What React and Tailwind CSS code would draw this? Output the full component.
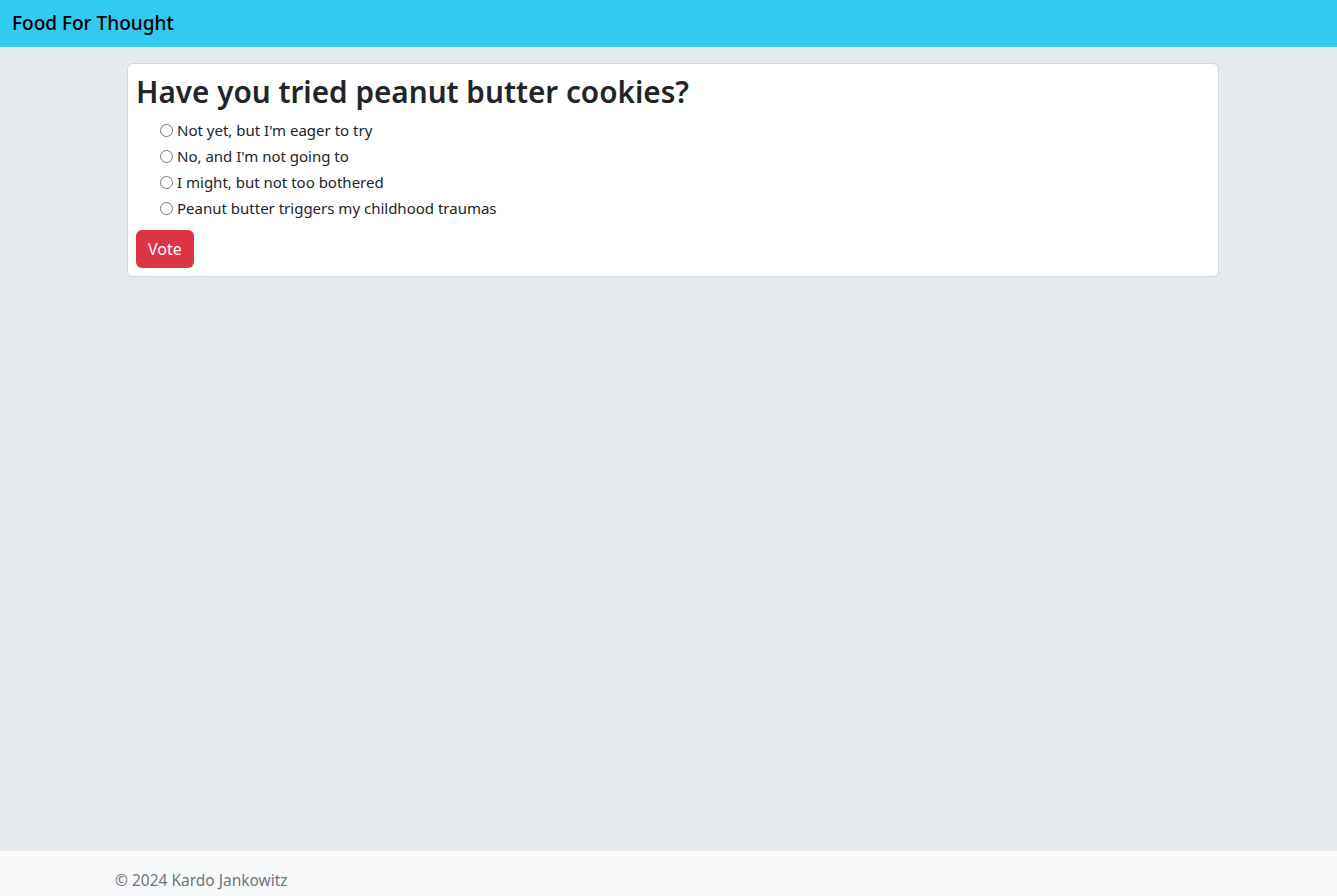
import React from "react";

const options = [
  "Not yet, but I'm eager to try",
  "No, and I'm not going to",
  "I might, but not too bothered",
  "Peanut butter triggers my childhood traumas",
];

const App = () => {
  return (
    <div
      className="flex flex-col min-h-screen bg-[#e7eaed] text-[#212529]"
      style={{ fontFamily: '"Noto Sans", "Open Sans", sans-serif' }}
    >
      <nav className="h-[47px] bg-[#32caee] flex items-center px-3">
        <span className="text-[19px] font-medium text-black">Food For Thought</span>
      </nav>

      <main className="flex-1 pt-4">
        <div className="ml-[127px] w-[1092px] bg-white border border-[#d4d6d8] rounded-md px-2 pt-2 pb-2">
          <h1 className="text-[29.7px] font-semibold leading-[39px] mb-2">
            Have you tried peanut butter cookies?
          </h1>
          <div className="flex flex-col pl-6">
            {options.map((o) => (
              <label key={o} className="flex items-center h-[26px] text-[15px] -mt-[2px] mb-[2px]">
                <input type="radio" name="vote" className="w-[13px] h-[13px] mr-[4px]" />
                {o}
              </label>
            ))}
          </div>
          <button className="mt-[7px] bg-[#dc3545] text-white rounded-md px-3 h-[38px] text-[16px]">
            Vote
          </button>
        </div>
      </main>

      <footer className="h-[45px] bg-[#f8f9fa] pl-[115px] pt-[19px]">
        <span className="block text-[15.5px] leading-[20px] text-[#6c757d]">© 2024 Kardo Jankowitz</span>
      </footer>
    </div>
  );
};

export default App;
